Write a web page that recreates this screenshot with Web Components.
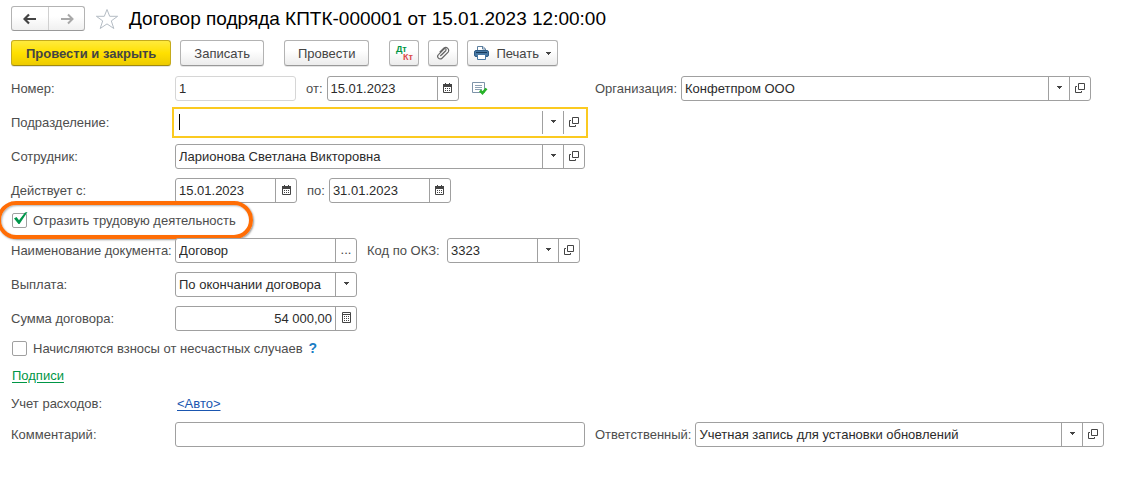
<!DOCTYPE html>
<html lang="ru">
<head>
<meta charset="utf-8">
<title>Договор подряда</title>
<style>
    body{
        margin: 0;
        background: #fff;
        color: #4d4d4d;
        font: 13px/15px "Liberation Sans", Arial, sans-serif;
    }
</style>
</head>
<body>

<contract-form></contract-form>

<script>
const icons = {
    back: '<svg width="14" height="12" viewBox="0 0 14 12"><path d="M1 6H13M6 1.5L1.5 6L6 10.5" fill="none" stroke="#444" stroke-width="2.2"/></svg>',
    forward: '<svg width="14" height="12" viewBox="0 0 14 12"><path d="M1 6H13M8 1.5L12.5 6L8 10.5" fill="none" stroke="#a8a8a8" stroke-width="2"/></svg>',
    star: '<svg width="24" height="22" viewBox="0 0 24 22"><path d="M12 1.5L14.7 8.3H22.6L16.3 12.9L18.8 20.5L12 15.9L5.2 20.5L7.7 12.9L1.4 8.3H9.3Z" fill="#fff" stroke="#b4bcc4"/></svg>',
    clip: '<svg width="14" height="14" viewBox="0 0 14 14"><path d="M4 9.7L9.6 4.1A1.2 1.2 0 0 0 7.9 2.5L2.2 8.3A2.5 2.5 0 0 0 5.7 11.9L11.8 5.8A3 3 0 0 0 7.7 1.6L3.4 5.9M9.7 4.2L5.2 8.8" transform="translate(.3 .3)" fill="none" stroke="#666" stroke-width="1.2"/></svg>',
    printer: '<svg width="15" height="14" viewBox="0 0 15 14"><path d="M3.5 5V.5H9L11.5 3V5" fill="#fff" stroke="#5c7f9f"/><path d="M8.5 .5V3H11" fill="none" stroke="#5c7f9f"/><rect x=".5" y="4.5" width="14" height="6" rx="1.5" fill="#4777a3" stroke="#2c5a85"/><path d="M2 6.5H13" stroke="#173b5c"/><path d="M3.5 8.5H11.5V13.5H3.5Z" fill="#fff" stroke="#4777a3"/></svg>',
    arrow: '<svg width="5" height="3" viewBox="0 0 5 3"><path d="M0 0H5V1H4V2H3V3H2V2H1V1H0Z" fill="#444"/></svg>',
    open: '<svg width="10" height="10" viewBox="0 0 10 10"><path d="M3.5 .5H9.5V6.5H3.5ZM2 3.5H.5V9.5H6.5V8" fill="none" stroke="#444"/></svg>',
    calendar: '<svg width="9" height="10" viewBox="0 0 9 10"><path d="M.5 1.5H8.5V9.5H.5Z" fill="#fff" stroke="#444"/><path d="M0 1H9V4H0ZM2 0H3V2H2ZM6 0H7V2H6Z" fill="#444"/><path d="M2 5.5H7M2 7.5H7" stroke="#444" stroke-dasharray="1 1"/></svg>',
    calc: '<svg width="9" height="11" viewBox="0 0 9 11"><path d="M.5 .5H8.5V10.5H.5ZM0 2.5H9" fill="none" stroke="#444"/><path d="M2 4.5H7M2 6.5H7M2 8.5H7" stroke="#444" stroke-dasharray="1 1"/></svg>',
    posted: '<svg width="16" height="13" viewBox="0 0 16 13"><path d="M.5 .5H12.5V10.5H.5Z" fill="#fff" stroke="#7d93a8"/><path d="M3 3.5H10M3 5.5H10M3 7.5H10" stroke="#8da0b3"/><path d="M8 8.5L10.5 11L14.5 6.5" fill="none" stroke="#27b327" stroke-width="2.6"/></svg>',
    dots: '...'
};
const hints = {
    arrow: 'Выбрать из списка',
    open: 'Открыть',
    calendar: 'Календарь',
    calc: 'Калькулятор',
    dots: 'Выбрать'
};

class UiIcon extends HTMLElement{
    constructor(){
        super()
        this.attachShadow({mode:'open'});
        this.shadowRoot.innerHTML = `
            <style>
                :host{ display: inline-flex; flex: none; }
            </style>
            ${icons[this.getAttribute('name')]}
        `;
    }
}

class UiButton extends HTMLElement{
    constructor(){
        super()
        const hint = this.getAttribute('hint');
        this.attachShadow({mode:'open'});
        this.shadowRoot.innerHTML = `
            <style>
                :host{ display: block; }
                button{
                    display: flex;
                    align-items: center;
                    justify-content: center;
                    gap: 7px;
                    box-sizing: border-box;
                    height: 26px;
                    padding: 0 13px;
                    border: 1px solid #b3b3b3;
                    border-bottom-color: #999;
                    border-radius: 3px;
                    background: linear-gradient(#fff 40%, #ececec);
                    box-shadow: 0 1px 0 rgba(0,0,0,0.1);
                    color: #444;
                    font: inherit;
                    white-space: nowrap;
                    cursor: pointer;
                }
                :host([primary]) button{
                    padding: 0 14px;
                    border-color: #c5ab1c;
                    border-bottom-color: #a08a10;
                    background: linear-gradient(#ffea3d, #ffe000 50%, #edcb00);
                    font-weight: bold;
                }
                :host([square]) button{
                    width: 30px;
                    padding: 0;
                }
                :host([menu]) button{
                    padding: 0 6px;
                }
            </style>
            <button type="button" ${hint ? `aria-label="${hint}"` : ''}><slot></slot></button>
        `;
    }
}

class NavButtons extends HTMLElement{
    constructor(){
        super()
        this.attachShadow({mode:'open'});
        this.shadowRoot.innerHTML = `
            <style>
                :host{
                    display: flex;
                    box-sizing: border-box;
                    height: 25px;
                    border: 1px solid #b3b3b3;
                    border-bottom-color: #999;
                    border-radius: 3px;
                    background: linear-gradient(#fff 40%, #f0f0f0);
                }
                button{
                    display: flex;
                    align-items: center;
                    justify-content: center;
                    width: 36px;
                    padding: 0;
                    border: 0;
                    background: none;
                }
                button + button{
                    border-left: 1px solid #d0d0d0;
                }
            </style>
            <button type="button" aria-label="Назад">${icons.back}</button>
            <button type="button" aria-label="Вперед">${icons.forward}</button>
        `;
    }
}

// label + input (or select) + a row of small buttons inside one frame
class UiField extends HTMLElement{
    constructor(){
        super()
        const value = this.getAttribute('value') || '';
        const buttons = (this.getAttribute('buttons') || '').split(' ').filter(Boolean);
        const isSelect = this.hasAttribute('select');
        const control = isSelect
            ? `<select id="control"><option>${value}</option></select>`
            : `<input id="control" type="text" value="${value}" ${this.hasAttribute('readonly') ? 'readonly' : ''}>`;
        const tail = buttons.map(name => isSelect
            ? `<span class="tail">${icons[name]}</span>`
            : `<button class="tail" type="button" aria-label="${hints[name]}">${icons[name]}</button>`
        ).join('');

        this.attachShadow({mode:'open'});
        this.shadowRoot.innerHTML = `
            <style>
                :host{
                    display: flex;
                    align-items: center;
                    min-width: 0;
                }
                label{
                    flex: none;
                    box-sizing: border-box;
                    min-width: var(--label-width, 0);
                    padding-right: 4px;
                    white-space: nowrap;
                }
                :host([lead]) label{
                    width: 164px;
                    padding-right: 0;
                }
                .frame{
                    position: relative;
                    display: flex;
                    flex: 1;
                    box-sizing: border-box;
                    width: var(--field-width, auto);
                    min-width: 0;
                    height: 25px;
                    border: 1px solid #a0a0a0;
                    border-radius: 3px;
                    background: #fff;
                }
                :host([fixed]) .frame{ flex: none; }
                :host([readonly]) .frame{ border-color: #d6d6d6; }
                :host([active]) .frame{
                    border-color: transparent;
                    border-radius: 0;
                    outline: 2px solid #fbca20;
                    outline-offset: 1px;
                }
                :host([active]) .frame::before{
                    content: '';
                    position: absolute;
                    top: 3px;
                    left: 3px;
                    width: 1px;
                    height: 16px;
                    background: #000;
                }
                input, select{
                    flex: 1;
                    min-width: 0;
                    margin: 0;
                    padding: 0 3px;
                    border: 0;
                    outline: none;
                    background: none;
                    color: #2b2b2b;
                    font: inherit;
                    appearance: none;
                }
                :host([number]) input{ text-align: right; }
                select{
                    margin-right: -21px;
                    padding-right: 21px;
                }
                .tail{
                    display: flex;
                    flex: none;
                    align-items: center;
                    justify-content: center;
                    box-sizing: border-box;
                    width: 21px;
                    padding: 0 0 2px;
                    border: 0;
                    border-left: 1px solid #a0a0a0;
                    background: none;
                    color: #444;
                    font: inherit;
                }
                span.tail{ pointer-events: none; }
            </style>
            <label for="control">${this.getAttribute('label')}</label>
            <div class="frame">${control}${tail}</div>
        `;
    }
}

class UiCheckbox extends HTMLElement{
    constructor(){
        super()
        this.attachShadow({mode:'open'});
        this.shadowRoot.innerHTML = `
            <style>
                :host{
                    position: relative;
                    display: flex;
                    align-items: center;
                    height: 17px;
                }
                input{
                    flex: none;
                    box-sizing: border-box;
                    width: 15px;
                    height: 15px;
                    margin: 0 6px 0 1px;
                    border: 1px solid #a0a0a0;
                    border-radius: 2px;
                    background: #fff;
                    appearance: none;
                }
                label{ white-space: nowrap; }
                .tick{
                    position: absolute;
                    top: 0;
                    left: 3px;
                    display: none;
                    pointer-events: none;
                }
                input:checked ~ .tick{ display: block; }
                .marker{
                    position: absolute;
                    inset: -11px -17px -10px -14px;
                    display: none;
                    border: 4px solid #ff6d05;
                    border-radius: 19px;
                    box-shadow: 1px 1px 2px rgba(0,0,0,0.4), inset 1px 1px 2px rgba(0,0,0,0.3);
                    pointer-events: none;
                }
                :host([marked]) .marker{ display: block; }
            </style>
            <input id="box" type="checkbox" ${this.hasAttribute('checked') ? 'checked' : ''}>
            <label for="box"><slot></slot></label>
            <svg class="tick" width="14" height="13" viewBox="0 0 14 13"><path d="M0 6.5L2.5 5L5 8.2L11 .5L13.5 0L5.5 12H4.5Z" fill="#00964b"/></svg>
            <div class="marker"></div>
        `;
    }
}

class UiLink extends HTMLElement{
    constructor(){
        super()
        this.attachShadow({mode:'open'});
        this.shadowRoot.innerHTML = `
            <style>
                :host{ display: block; }
                a{
                    color: var(--link-color, #1a56b0);
                    text-decoration: underline;
                    text-underline-offset: 2px;
                }
                :host([plain]) a{ text-decoration: none; }
            </style>
            <a href="#"><slot></slot></a>
        `;
    }
}

// left part of the form and an optional right part
class FormRow extends HTMLElement{
    constructor(){
        super()
        this.attachShadow({mode:'open'});
        this.shadowRoot.innerHTML = `
            <style>
                :host{
                    display: grid;
                    grid-template-columns: minmax(0, 574fr) minmax(0, 509fr);
                    gap: 10px;
                }
                .main{
                    display: flex;
                    align-items: center;
                    gap: 10px;
                }
                :host([text]) .main{ min-height: 19px; }
            </style>
            <div class="main"><slot></slot></div>
            <slot name="side"></slot>
        `;
    }
}

class ContractForm extends HTMLElement{
    constructor(){
        super()
        this.attachShadow({mode:'open'});
        this.shadowRoot.innerHTML = `
            <style>
                :host{
                    display: block;
                    padding: 6px 29px 30px 11px;
                }
                header{
                    display: flex;
                    align-items: center;
                    gap: 10px;
                    height: 25px;
                }
                h1{
                    margin: 0;
                    color: #000;
                    font-size: 19px;
                    font-weight: normal;
                    line-height: 22px;
                    white-space: nowrap;
                }
                .toolbar{
                    display: flex;
                    gap: 20px;
                    margin: 9px 0 10px;
                }
                .group{
                    display: flex;
                    gap: 9px;
                }
                .star{
                    display: flex;
                    padding: 0;
                    border: 0;
                    background: none;
                }
                .dtkt{
                    display: grid;
                    width: 17px;
                    font-size: 9px;
                    font-weight: bold;
                    line-height: 8px;
                }
                .dt{ color: #009646; justify-self: start; }
                .kt{ color: #dd4a4a; justify-self: end; }
                form{
                    display: flex;
                    flex-direction: column;
                    gap: 9px;
                }
                .wide{ flex: 1; }
                .number{ --field-width: 121px; }
                .posting-date{ --field-width: 132px; }
                .date{ --field-width: 122px; }
                .medium{ --field-width: 182px; }
                .code{ --label-width: 80px; --field-width: 133px; }
                .posted{ margin-left: 3px; }
                .organization{ margin-right: 13px; }
                .caption{ width: 156px; }
                .help{
                    --link-color: #1a7cc4;
                    margin-left: -4px;
                    font-size: 14px;
                    font-weight: bold;
                }
                .signs{ --link-color: #009646; margin-left: 1px; }
            </style>
            <header>
                <nav-buttons></nav-buttons>
                <button class="star" type="button" aria-label="В избранное">${icons.star}</button>
                <h1>Договор подряда КПТК-000001 от 15.01.2023 12:00:00</h1>
            </header>
            <div class="toolbar">
                <div class="group">
                    <ui-button primary>Провести и закрыть</ui-button>
                    <ui-button>Записать</ui-button>
                </div>
                <ui-button>Провести</ui-button>
                <div class="group">
                    <ui-button square><span class="dtkt"><span class="dt">Дт</span><span class="kt">Кт</span></span></ui-button>
                    <ui-button square hint="Файлы"><ui-icon name="clip"></ui-icon></ui-button>
                    <ui-button menu><ui-icon name="printer"></ui-icon>Печать<ui-icon name="arrow"></ui-icon></ui-button>
                </div>
            </div>
            <form>
                <form-row>
                    <ui-field class="number" lead fixed readonly label="Номер:" value="1"></ui-field>
                    <ui-field class="posting-date" fixed label="от:" value="15.01.2023" buttons="calendar"></ui-field>
                    <ui-icon class="posted" name="posted"></ui-icon>
                    <ui-field class="organization" slot="side" label="Организация:" value="Конфетпром ООО" buttons="arrow open"></ui-field>
                </form-row>
                <form-row>
                    <ui-field class="wide" lead active label="Подразделение:" buttons="arrow open"></ui-field>
                </form-row>
                <form-row>
                    <ui-field class="wide" lead label="Сотрудник:" value="Ларионова Светлана Викторовна" buttons="arrow open"></ui-field>
                </form-row>
                <form-row>
                    <ui-field class="date" lead fixed label="Действует с:" value="15.01.2023" buttons="calendar"></ui-field>
                    <ui-field class="date" fixed label="по:" value="31.01.2023" buttons="calendar"></ui-field>
                </form-row>
                <form-row>
                    <ui-checkbox checked marked>Отразить трудовую деятельность</ui-checkbox>
                </form-row>
                <form-row>
                    <ui-field class="medium" lead fixed label="Наименование документа:" value="Договор" buttons="dots"></ui-field>
                    <ui-field class="code" fixed label="Код по ОКЗ:" value="3323" buttons="arrow open"></ui-field>
                </form-row>
                <form-row>
                    <ui-field class="medium" lead fixed select label="Выплата:" value="По окончании договора" buttons="arrow"></ui-field>
                </form-row>
                <form-row>
                    <ui-field class="medium" lead fixed number label="Сумма договора:" value="54 000,00" buttons="calc"></ui-field>
                </form-row>
                <form-row>
                    <ui-checkbox>Начисляются взносы от несчастных случаев</ui-checkbox>
                    <ui-link class="help" plain>?</ui-link>
                </form-row>
                <form-row text>
                    <ui-link class="signs">Подписи</ui-link>
                </form-row>
                <form-row text>
                    <span class="caption">Учет расходов:</span>
                    <ui-link>&lt;Авто&gt;</ui-link>
                </form-row>
                <form-row>
                    <ui-field class="wide" lead label="Комментарий:"></ui-field>
                    <ui-field slot="side" label="Ответственный:" value="Учетная запись для установки обновлений" buttons="arrow open"></ui-field>
                </form-row>
            </form>
        `;
    }
}

window.customElements.define('ui-icon',UiIcon)
window.customElements.define('ui-button',UiButton)
window.customElements.define('nav-buttons',NavButtons)
window.customElements.define('ui-field',UiField)
window.customElements.define('ui-checkbox',UiCheckbox)
window.customElements.define('ui-link',UiLink)
window.customElements.define('form-row',FormRow)
window.customElements.define('contract-form',ContractForm)
</script>
</body>
</html>
